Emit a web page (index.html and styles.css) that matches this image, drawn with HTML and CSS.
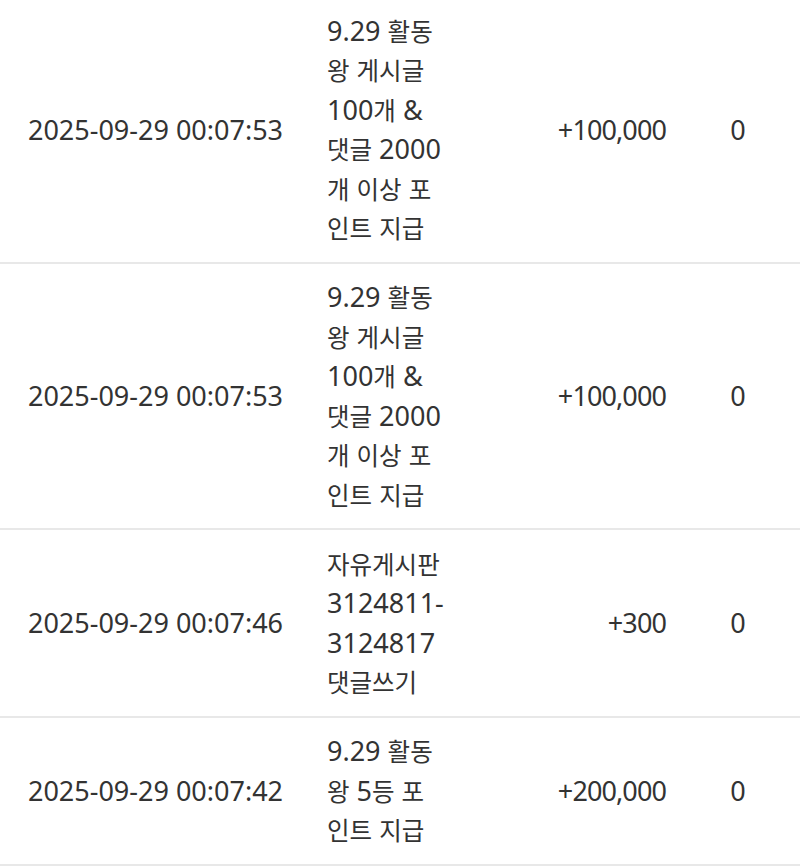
FILE: index.html
```html
<!DOCTYPE html>
<html lang="ko">
<head>
<meta charset="utf-8">
<title>포인트 내역</title>
<link rel="stylesheet" href="styles.css">
</head>
<body>
<div class="list">
  <div class="row">
    <div class="date">2025-09-29 00:07:53</div>
    <div class="desc">9.29 <span class="kr">활동</span> <span class="kr">왕</span> <span class="kr">게시글</span> 100<span class="kr">개</span> &amp; <span class="kr">댓글</span> 2000<span class="kr">개</span> <span class="kr">이상</span> <span class="kr">포인트</span> <span class="kr">지급</span></div>
    <div class="amount">+100,000</div>
    <div class="balance">0</div>
  </div>
  <div class="row">
    <div class="date">2025-09-29 00:07:53</div>
    <div class="desc">9.29 <span class="kr">활동</span> <span class="kr">왕</span> <span class="kr">게시글</span> 100<span class="kr">개</span> &amp; <span class="kr">댓글</span> 2000<span class="kr">개</span> <span class="kr">이상</span> <span class="kr">포인트</span> <span class="kr">지급</span></div>
    <div class="amount">+100,000</div>
    <div class="balance">0</div>
  </div>
  <div class="row">
    <div class="date">2025-09-29 00:07:46</div>
    <div class="desc"><span class="kr">자유게시판</span> 3124811-3124817 <span class="kr">댓글쓰기</span></div>
    <div class="amount">+300</div>
    <div class="balance">0</div>
  </div>
  <div class="row">
    <div class="date">2025-09-29 00:07:42</div>
    <div class="desc">9.29 <span class="kr">활동</span> <span class="kr">왕</span> 5<span class="kr">등</span> <span class="kr">포인트</span> <span class="kr">지급</span></div>
    <div class="amount">+200,000</div>
    <div class="balance">0</div>
  </div>
</div>
</body>
</html>
```

FILE: styles.css
```css
html, body {
  margin: 0;
  padding: 0;
  background: #ffffff;
}

body {
  font-family: "Noto Sans", "Noto Sans CJK KR", sans-serif;
  font-size: 27px;
  line-height: 39.5px;
  color: #333333;
  overflow: hidden;
}

.list {
  margin-top: -3px;
}

.row {
  display: grid;
  grid-template-columns: 311px 157px 215px 1fr;
  align-items: center;
  padding: 13.75px 0;
  border-bottom: 2px solid #e8e8e8;
}

.date {
  text-align: center;
  white-space: nowrap;
}

.desc {
  padding: 0 16px;
  width: 115px;
}

.kr {
  font-family: "Noto Sans CJK KR", sans-serif;
  font-size: 24.5px;
}

.amount {
  text-align: right;
  padding-right: 17px;
  letter-spacing: -0.9px;
}

.balance {
  text-align: center;
  padding-right: 7px;
}
```
